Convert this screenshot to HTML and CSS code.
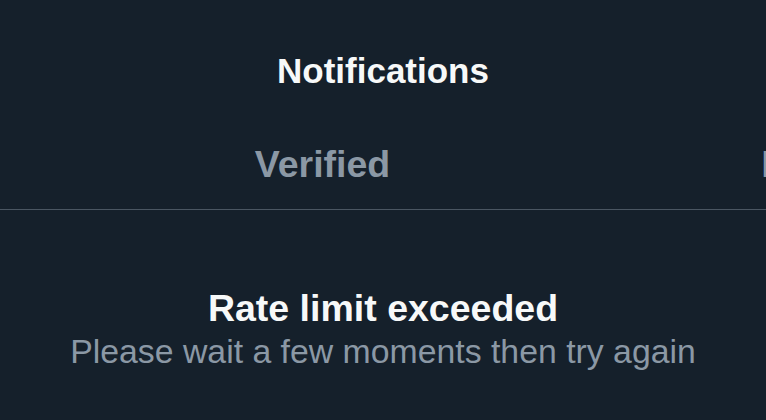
FILE: index.html
```html
<!DOCTYPE html>
<html lang="en">
<head>
<meta charset="utf-8">
<title>Notifications</title>
<link rel="stylesheet" href="styles.css">
</head>
<body>
<div class="page">
  <header class="header">
    <h1 class="title">Notifications</h1>
  </header>
  <nav class="tabs">
    <a class="tab">Verified</a>
    <a class="tab">Mentions</a>
  </nav>
  <main class="empty">
    <h2 class="empty-title">Rate limit exceeded</h2>
    <p class="empty-text">Please wait a few moments then try again</p>
  </main>
</div>
</body>
</html>
```

FILE: styles.css
```css
html, body {
  margin: 0;
  padding: 0;
  background: #15202b;
}
body {
  width: 766px;
  height: 420px;
  overflow: hidden;
  font-family: "Liberation Sans", Arial, sans-serif;
}
.page {
  display: flex;
  flex-direction: column;
}
.header {
  height: 124px;
  display: flex;
  justify-content: center;
}
.title {
  margin: 0;
  padding-top: 47px;
  font-size: 35px;
  line-height: 48px;
  font-weight: 700;
  color: #f7f9f9;
  height: 48px;
}
.tabs {
  display: flex;
  padding-left: 62px;
  height: 85px;
  border-bottom: 1px solid #4a5662;
  overflow: hidden;
}
.tab {
  flex: 0 0 521px;
  display: flex;
  justify-content: center;
  padding-top: 19px;
  font-size: 37.5px;
  line-height: 42px;
  font-weight: 700;
  color: #8b98a5;
}
.empty {
  display: flex;
  flex-direction: column;
  align-items: center;
  padding-top: 77px;
}
.empty-title {
  margin: 0;
  font-size: 37.5px;
  line-height: 42px;
  font-weight: 700;
  color: #f7f9f9;
}
.empty-text {
  margin: 0;
  padding-top: 2px;
  font-size: 33.8px;
  line-height: 40px;
  color: #8b98a5;
}
```
